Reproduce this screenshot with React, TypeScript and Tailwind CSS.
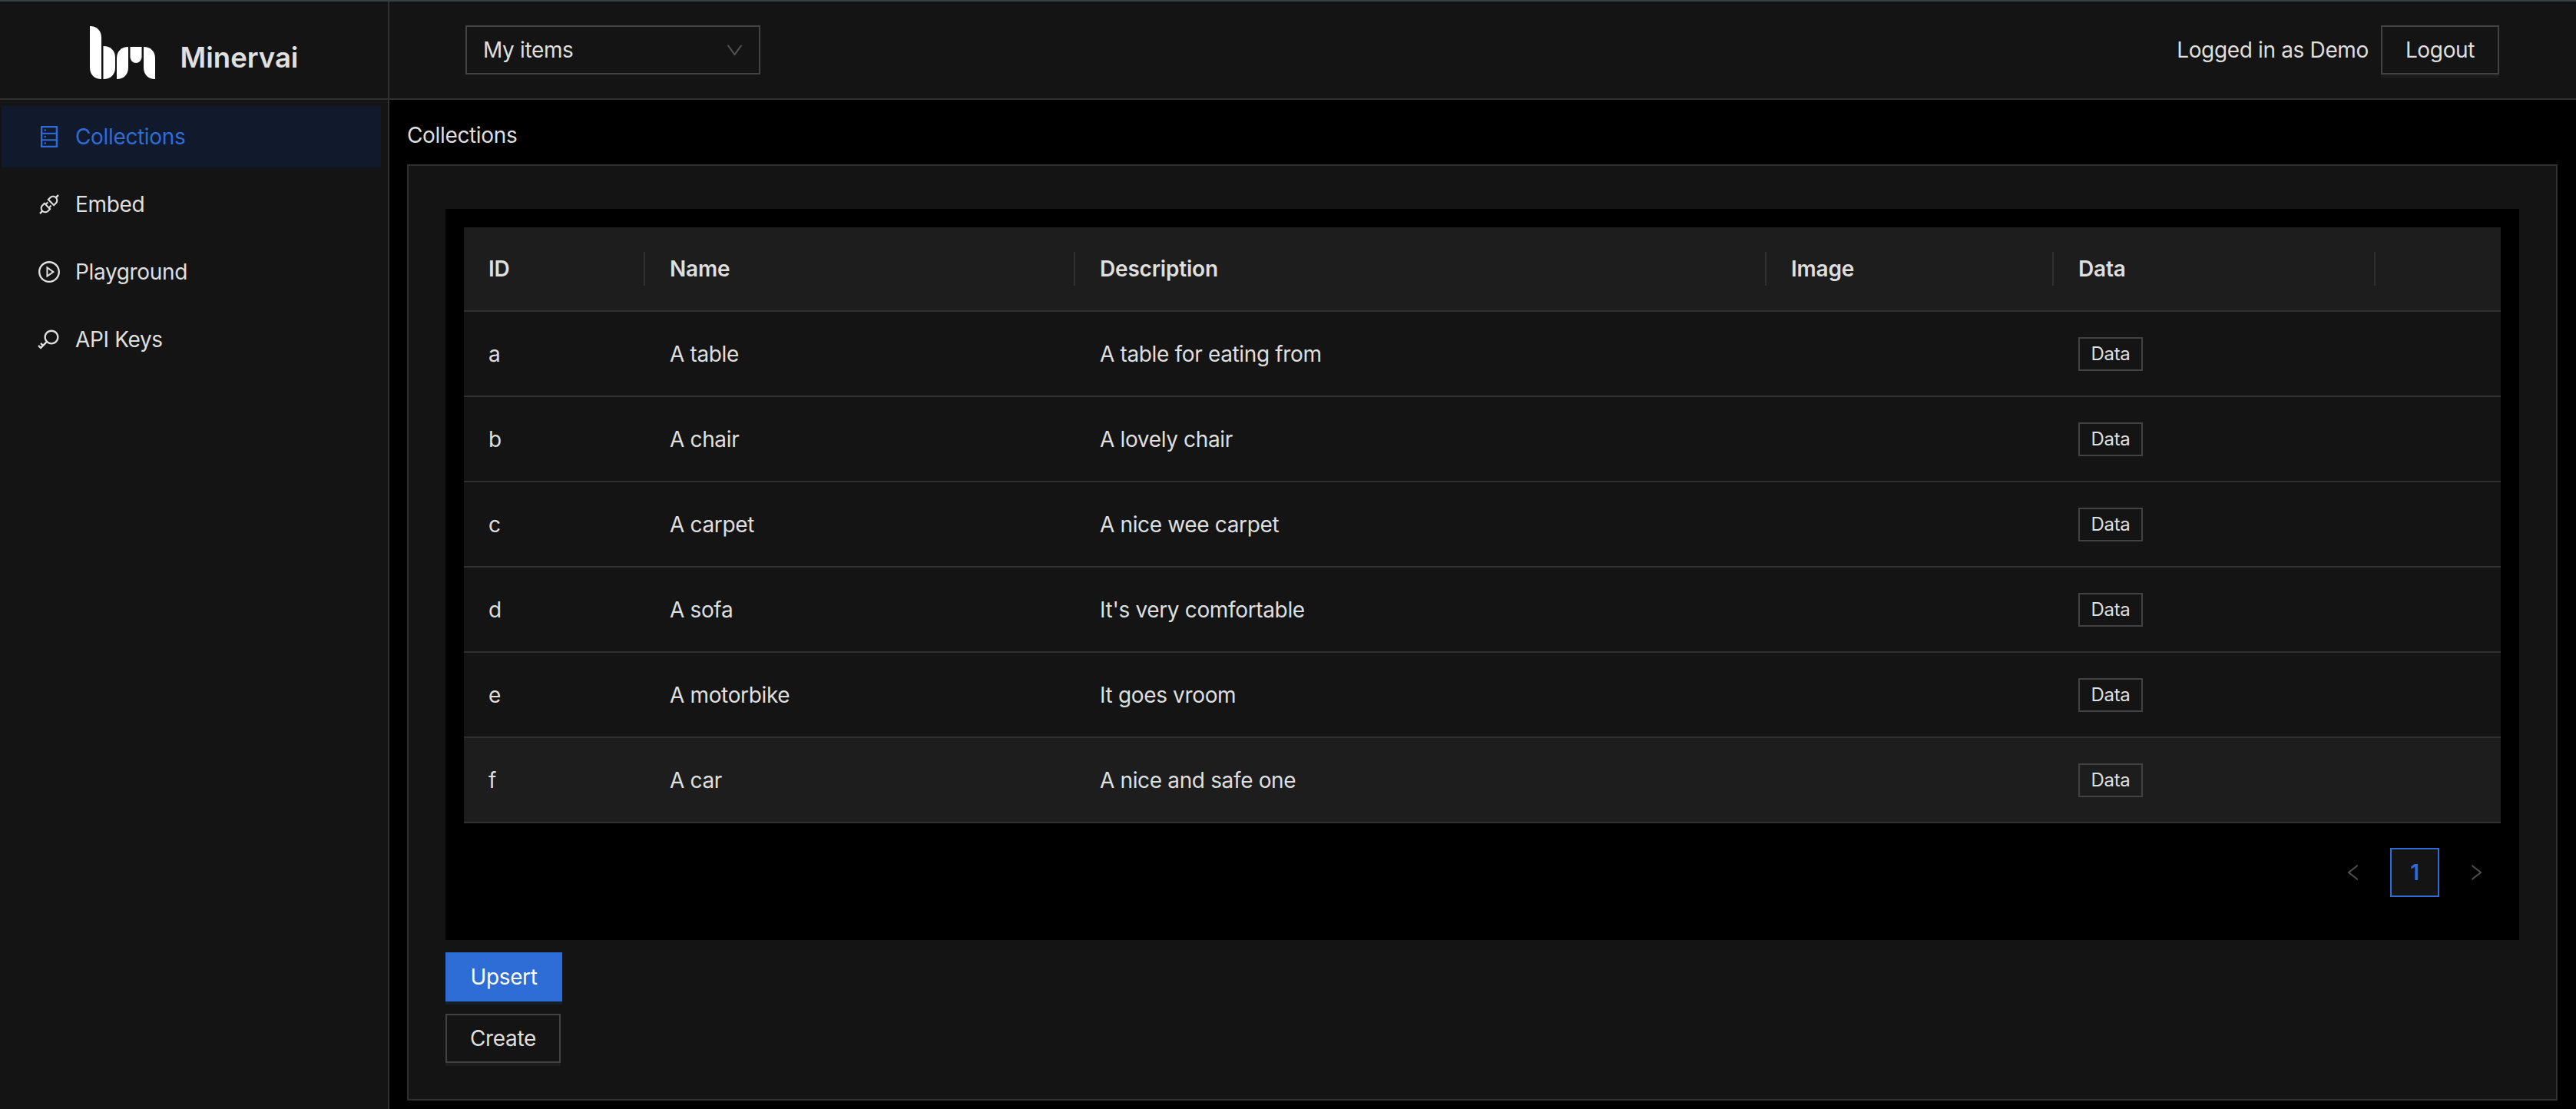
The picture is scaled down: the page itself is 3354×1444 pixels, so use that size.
import { AiOutlineApi, AiOutlineDatabase, AiOutlineDown, AiOutlineKey, AiOutlineLeft, AiOutlinePlayCircle, AiOutlineRight } from 'react-icons/ai';

const navItems = [
  { label: 'Collections', icon: AiOutlineDatabase, active: true },
  { label: 'Embed', icon: AiOutlineApi, active: false },
  { label: 'Playground', icon: AiOutlinePlayCircle, active: false },
  { label: 'API Keys', icon: AiOutlineKey, active: false },
];

const columns = [
  { title: 'ID', width: 'w-[236px]' },
  { title: 'Name', width: 'w-[560px]' },
  { title: 'Description', width: 'w-[900px]' },
  { title: 'Image', width: 'w-[374px]' },
  { title: 'Data', width: 'w-[419px]' },
  { title: '', width: 'w-[163px]' },
];

const rows = [
  { id: 'a', name: 'A table', description: 'A table for eating from' },
  { id: 'b', name: 'A chair', description: 'A lovely chair' },
  { id: 'c', name: 'A carpet', description: 'A nice wee carpet' },
  { id: 'd', name: 'A sofa', description: "It's very comfortable" },
  { id: 'e', name: 'A motorbike', description: 'It goes vroom' },
  { id: 'f', name: 'A car', description: 'A nice and safe one' },
];

const Logo = () => (
  <svg width="86" height="70" viewBox="0 0 86 70" fill="#ffffff">
    <path d="M0 0C9 0 15 6 15 15V69C6 69 0 63 0 54Z" />
    <path d="M17.5 26C27 26 33 32 33 41V54C33 63 27 69 17.5 69Z" />
    <path d="M50 27C41 27 35 33 35 42V69C44 69 50 63 50 54Z" />
    <path d="M52.5 27H67.5V40.5A7.5 7.5 0 0 1 52.5 40.5Z" />
    <path d="M70 27C79 27 85 33 85 42V69C76 69 70 63 70 54Z" />
  </svg>
);

const App = () => {
  return (
    <div className="flex h-[1444px] w-full flex-col overflow-hidden border-t-2 border-[#3a3f44] bg-black font-['Inter',sans-serif] text-[28px] tracking-[-0.35px] text-[#dfdfdf]">
      {/* Header */}
      <header className="flex h-[128px] shrink-0 border-b-2 border-[#303030] bg-[#141414]">
        <div className="flex w-[507px] shrink-0 items-center justify-center gap-8 border-r-2 border-[#303030] pt-2">
          <Logo />
          <span className="pt-3 text-[36.5px] font-semibold tracking-normal text-[#e0e0e0]">Minervai</span>
        </div>
        <div className="flex flex-1 items-center justify-between pl-[99px] pr-[100px]">
          <div className="flex h-[64px] w-[384px] items-center justify-between border-2 border-[#424242] pl-[21px] pr-[18px]">
            <span>My items</span>
            <AiOutlineDown size={27} className="text-[#505050]" />
          </div>
          <div className="flex items-center gap-4">
            <span>Logged in as Demo</span>
            <button className="h-[64px] w-[154px] border-2 border-[#424242] bg-[#141414] shadow-[0_4px_0_rgba(255,255,255,0.04)]">
              Logout
            </button>
          </div>
        </div>
      </header>

      <div className="flex flex-1">
        {/* Sidebar */}
        <aside className="w-[507px] shrink-0 border-r-2 border-[#303030] bg-[#141414] pl-[2px] pr-[9px] pt-2">
          <nav className="flex flex-col gap-2">
            {navItems.map((item) => (
              <div
                key={item.label}
                className={
                  item.active
                    ? 'flex h-[80px] items-center gap-[18px] bg-[#111a2c] pl-[46px] text-[#2e6cd6]'
                    : 'flex h-[80px] items-center gap-[18px] pl-[46px] text-[#dfdfdf]'
                }
              >
                <item.icon size={32} />
                <span>{item.label}</span>
              </div>
            ))}
          </nav>
        </aside>

        {/* Main */}
        <main className="min-w-0 flex-1 pl-[23px] pr-[24px]">
          <div className="flex h-[84px] items-center pt-2">Collections</div>
          <div className="h-[1219px] border-2 border-[#303030] bg-[#141414] px-[48px] pt-[56px]">
            <div className="bg-black px-[24px] pt-[24px] pb-[56px]">
              <table className="w-full table-fixed border-separate border-spacing-0">
                <thead>
                  <tr>
                    {columns.map((column, index) => (
                      <th
                        key={index}
                        className={`relative h-[110px] border-b-2 border-[#303030] bg-[#1d1d1d] px-8 text-left font-semibold tracking-[-0.2px] ${column.width}`}
                      >
                        {column.title}
                        {index < 5 && (
                          <span className="absolute right-0 top-1/2 h-[44px] w-[2px] -translate-y-1/2 bg-[#303030]" />
                        )}
                      </th>
                    ))}
                  </tr>
                </thead>
                <tbody>
                  {rows.map((row, index) => {
                    const cell = index === 5
                      ? 'h-[111px] border-b-2 border-[#303030] bg-[#1d1d1d] px-8'
                      : 'h-[111px] border-b-2 border-[#303030] bg-[#141414] px-8';
                    return (
                      <tr key={row.id}>
                        <td className={cell}>{row.id}</td>
                        <td className={cell}>{row.name}</td>
                        <td className={cell}>{row.description}</td>
                        <td className={cell} />
                        <td className={cell}>
                          <button className="flex h-[44px] w-[84px] items-center justify-center border-2 border-[#424242] text-[24px]">
                            Data
                          </button>
                        </td>
                        <td className={cell} />
                      </tr>
                    );
                  })}
                </tbody>
              </table>

              {/* Pagination */}
              <div className="mt-8 flex justify-end gap-4">
                <div className="flex h-[64px] w-[64px] items-center justify-center text-[#4a4a4a]">
                  <AiOutlineLeft size={28} />
                </div>
                <div className="flex h-[64px] w-[64px] items-center justify-center border-2 border-[#2e6cd6] bg-[#141414] font-semibold text-[#2e6cd6]">
                  1
                </div>
                <div className="flex h-[64px] w-[64px] items-center justify-center text-[#4a4a4a]">
                  <AiOutlineRight size={28} />
                </div>
              </div>
            </div>

            <div className="mt-4 flex flex-col items-start gap-4">
              <button className="h-[64px] w-[152px] bg-[#2e6cd6] text-white shadow-[0_4px_0_rgba(5,145,255,0.1)]">
                Upsert
              </button>
              <button className="h-[64px] w-[150px] border-2 border-[#424242] bg-[#141414] shadow-[0_4px_0_rgba(255,255,255,0.04)]">
                Create
              </button>
            </div>
          </div>
        </main>
      </div>
    </div>
  );
};

export default App;
